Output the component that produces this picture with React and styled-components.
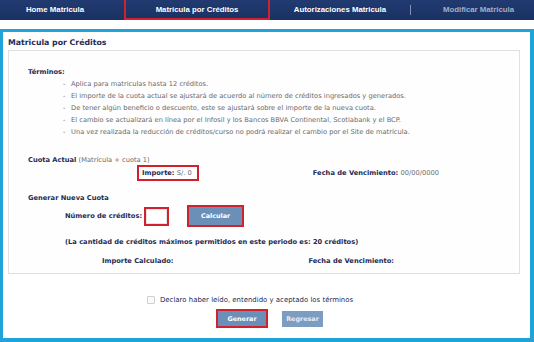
import React from "react";
import styled, { createGlobalStyle } from "styled-components";

const Global = createGlobalStyle`
  html, body { margin: 0; padding: 0; background: #ffffff; }
  body { font-family: "Liberation Sans", Arial, sans-serif; }
  * { box-sizing: border-box; }
`;

const RED = "#d0212c";
const LABEL = "#1f2c55";
const GRAY = "#6a6a6a";

const Page = styled.div`
  width: 534px;
  height: 342px;
  display: flex;
  flex-direction: column;
  overflow: hidden;
`;

const Nav = styled.nav`
  height: 20px;
  background: linear-gradient(#213b70, #1a3163);
  display: flex;
  align-items: stretch;
`;

const Tab = styled.div`
  flex: 0 0 ${(p) => p.$w}px;
  padding: 0 ${(p) => p.$pr || 0}px 0 ${(p) => p.$pl || 0}px;
  display: flex;
  align-items: center;
  justify-content: center;
  font: bold 7.8px "Liberation Sans", Arial, sans-serif;
  color: ${(p) => (p.$muted ? "#a6afc4" : "#ffffff")};
  border: 2px solid ${(p) => (p.$active ? RED : "transparent")};
  border-top: 0;
  white-space: nowrap;
`;

const Sep = styled.div`
  flex: 0 0 1px;
  background: #8390b0;
  margin: 5px 0;
`;

const Frame = styled.section`
  margin-top: 9px;
  height: 313px;
  border: 3px solid #1fa3d9;
  border-right-width: 4px;
  border-bottom-width: 4px;
  display: flex;
  flex-direction: column;
`;

const Title = styled.div`
  padding: 6px 0 0 5px;
  height: 18px;
  line-height: 12px;
  font: bold 7.8px Tahoma, "DejaVu Sans", sans-serif;
  color: ${LABEL};
`;

const Panel = styled.div`
  margin: 0 10px 0 5px;
  border: 1px solid #e0e0e0;
  background: #fefefe;
  padding: 15px 0 8px 19px;
  color: ${LABEL};
  font: 6.7px "DejaVu Sans", Verdana, sans-serif;
`;

const Label = styled.div`
  font-weight: bold;
  line-height: ${(p) => p.$lh || 10}px;
  margin-top: ${(p) => p.$mt || 0}px;
  padding-left: ${(p) => p.$pl || 0}px;
  white-space: nowrap;
`;

const Muted = styled.span`
  font-weight: normal;
  color: ${GRAY};
`;

const List = styled.ul`
  list-style: none;
  margin: 0;
  padding: 0 0 0 35px;
  color: ${GRAY};
`;

const Item = styled.li`
  display: flex;
  line-height: 12px;
  white-space: nowrap;
  &::before {
    content: "-";
    width: 8px;
  }
`;

const Row = styled.div`
  display: flex;
  align-items: center;
  margin-top: ${(p) => p.$mt || 0}px;
  padding-left: ${(p) => p.$pl || 0}px;
  white-space: nowrap;
`;

const Highlight = styled.div`
  border: 2px solid ${RED};
  display: inline-flex;
  align-items: center;
  height: ${(p) => p.$h}px;
  padding: ${(p) => p.$pad || 0}px;
  margin-left: ${(p) => p.$ml || 0}px;
`;

const Strong = styled.b`
  font-weight: bold;
  color: ${LABEL};
  margin-left: ${(p) => p.$ml || 0}px;
`;

const Input = styled.div`
  width: 21px;
  height: 15px;
  background: #fff;
  border: 1px solid #e4e4e4;
`;

const Button = styled.div`
  display: flex;
  align-items: center;
  justify-content: center;
  width: ${(p) => p.$w}px;
  height: ${(p) => p.$h}px;
  background: ${(p) => (p.$light ? "#7d9cc2" : "#6a8fb9")};
  color: ${(p) => (p.$light ? "#e6ecf5" : "#ffffff")};
  font: bold 6.4px "DejaVu Sans", Verdana, sans-serif;
`;

const Footer = styled.div`
  display: flex;
  flex-direction: column;
`;

const Check = styled.span`
  width: 8px;
  height: 8px;
  border: 1px solid #cfcfcf;
  border-radius: 1px;
  background: #fafafa;
  margin-right: 5px;
`;

const CheckRow = styled.label`
  display: flex;
  align-items: center;
  margin-top: 22px;
  padding-left: 144px;
  line-height: 10px;
  font: 6.95px "DejaVu Sans", Verdana, sans-serif;
  color: ${LABEL};
`;

const Buttons = styled.div`
  display: flex;
  align-items: center;
  margin-top: 5px;
  padding-left: 213px;
  gap: 14px;
`;

const terms = [
  "Aplica para matriculas hasta 12 créditos.",
  "El importe de la cuota actual se ajustará de acuerdo al número de créditos ingresados y generados.",
  "De tener algún beneficio o descuento, este se ajustará sobre el importe de la nueva cuota.",
  "El cambio se actualizará en línea por el Infosil y los Bancos BBVA Continental, Scotiabank y el BCP.",
  "Una vez realizada la reducción de créditos/curso no podrá realizar el cambio por el Site de matrícula.",
];

export default function App() {
  return (
    <Page>
      <Global />
      <Nav>
        <Tab $w={124} $pr={14}>Home Matricula</Tab>
        <Tab $w={146} $active>Matricula por Créditos</Tab>
        <Tab $w={140}>Autorizaciones Matricula</Tab>
        <Sep />
        <Tab $w={123} $pl={12} $muted>Modificar Matricula</Tab>
      </Nav>
      <Frame>
        <Title>Matricula por Créditos</Title>
        <Panel>
          <Label $lh={12}>Términos:</Label>
          <List>
            {terms.map((t) => (
              <Item key={t}>{t}</Item>
            ))}
          </List>
          <Label $mt={17}>
            Cuota Actual <Muted>(Matrícula + cuota 1)</Muted>
          </Label>
          <Row $pl={109}>
            <Highlight $h={16} $pad={3}>
              <Strong>Importe:</Strong>&nbsp;<Muted>S/. 0&nbsp;</Muted>
            </Highlight>
            <Strong $ml={114}>Fecha de Vencimiento:</Strong>
            &nbsp;<Muted>00/00/0000</Muted>
          </Row>
          <Label $mt={12}>Generar Nueva Cuota</Label>
          <Row $mt={2} $pl={37}>
            <Strong>Número de créditos:</Strong>
            <Highlight $h={19} $ml={2}>
              <Input />
            </Highlight>
            <Highlight $h={22} $ml={18}>
              <Button $w={53} $h={18}>Calcular</Button>
            </Highlight>
          </Row>
          <Label $mt={10} $pl={37}>
            (La cantidad de créditos máximos permitidos en este periodo es: 20 créditos)
          </Label>
          <Row $mt={10} $pl={74}>
            <Strong>Importe Calculado:</Strong>
            <Strong $ml={135}>Fecha de Vencimiento:</Strong>
          </Row>
        </Panel>
        <Footer>
          <CheckRow>
            <Check />
            Declaro haber leído, entendido y aceptado los términos
          </CheckRow>
          <Buttons>
            <Highlight $h={19}>
              <Button $w={48} $h={15}>Generar</Button>
            </Highlight>
            <Button $w={41} $h={16} $light>Regresar</Button>
          </Buttons>
        </Footer>
      </Frame>
    </Page>
  );
}
